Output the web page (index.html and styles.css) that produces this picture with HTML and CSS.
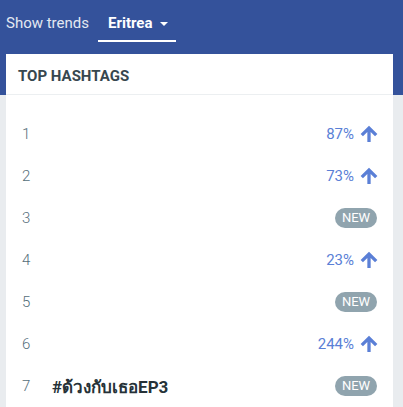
FILE: index.html
```html
<!DOCTYPE html>
<html>
<head>
<meta charset="utf-8">
<link rel="stylesheet" href="styles.css">
</head>
<body>
<div class="hero">
  <nav class="nav">
    <span class="nav-label">Show trends</span>
    <span class="tab">Eritrea <span class="caret"></span></span>
  </nav>
</div>
<section class="card">
  <header class="card-head">TOP HASHTAGS</header>
  <ol class="list">
    <li class="row"><span class="num">1</span><span class="tag"></span><span class="trend">87% <svg class="arr" viewBox="0 0 24 24"><path d="M4 12l1.41 1.41L11 7.83V20h2V7.83l5.58 5.59L20 12l-8-8-8 8z"/></svg></span></li>
    <li class="row"><span class="num">2</span><span class="tag"></span><span class="trend">73% <svg class="arr" viewBox="0 0 24 24"><path d="M4 12l1.41 1.41L11 7.83V20h2V7.83l5.58 5.59L20 12l-8-8-8 8z"/></svg></span></li>
    <li class="row"><span class="num">3</span><span class="tag"></span><span class="badge">NEW</span></li>
    <li class="row"><span class="num">4</span><span class="tag"></span><span class="trend">23% <svg class="arr" viewBox="0 0 24 24"><path d="M4 12l1.41 1.41L11 7.83V20h2V7.83l5.58 5.59L20 12l-8-8-8 8z"/></svg></span></li>
    <li class="row"><span class="num">5</span><span class="tag"></span><span class="badge">NEW</span></li>
    <li class="row"><span class="num">6</span><span class="tag"></span><span class="trend">244% <svg class="arr" viewBox="0 0 24 24"><path d="M4 12l1.41 1.41L11 7.83V20h2V7.83l5.58 5.59L20 12l-8-8-8 8z"/></svg></span></li>
    <li class="row"><span class="num">7</span><span class="tag">#ด้วงกับเธอEP3</span><span class="badge">NEW</span></li>
  </ol>
</section>
</body>
</html>
```
FILE: styles.css
```css
html, body {
  margin: 0;
  padding: 0;
}
body {
  background: #e9ecef;
  font-family: Roboto, "Noto Sans", sans-serif;
  height: 407px;
  overflow: hidden;
}
.hero {
  background: #34529b;
  height: 95px;
}
.nav {
  display: flex;
  align-items: flex-start;
  height: 54px;
  padding-left: 6px;
  box-sizing: border-box;
}
.nav-label {
  color: #e3e8f2;
  font-size: 15px;
  font-weight: 400;
  line-height: 20px;
  padding-top: 13px;
}
.tab {
  margin-left: 9px;
  display: flex;
  align-items: center;
  gap: 8px;
  color: #fff;
  font-weight: 700;
  font-size: 15px;
  line-height: 20px;
  padding: 13px 8px 7px 10px;
  border-bottom: 2px solid #fff;
}
.caret {
  width: 0;
  height: 0;
  border-left: 4px solid transparent;
  border-right: 4px solid transparent;
  border-top: 4px solid #fff;
  margin-top: 1px;
}
.card {
  background: #fff;
  margin: -41px 10px 0 6px;
  position: relative;
}
.card-head {
  height: 41px;
  box-sizing: border-box;
  padding: 12px 12px 0 12px;
  font-size: 15px;
  font-weight: 700;
  color: #37474f;
  line-height: 20px;
  border-bottom: 1px solid #eceff1;
}
.list {
  list-style: none;
  margin: 0;
  padding: 18px 16px 0 16px;
}
.row {
  height: 42px;
  display: flex;
  align-items: center;
}
.num {
  width: 30px;
  font-size: 15px;
  font-weight: 300;
  color: #546e7a;
}
.tag {
  flex: 1;
  font-size: 17px;
  font-weight: 700;
  color: #263238;
}
.trend {
  display: flex;
  align-items: center;
  gap: 4px;
  font-size: 15px;
  font-weight: 400;
  color: #5a7fd6;
}
.arr {
  width: 22px;
  height: 22px;
  fill: #5a7fd6;
  stroke: #5a7fd6;
  stroke-width: 1.6;
  margin-right: -3px;
}
.badge {
  background: #90a4ae;
  color: #fff;
  font-size: 13px;
  line-height: 20px;
  height: 20px;
  width: 42px;
  text-align: center;
  border-radius: 10px;
}
```
